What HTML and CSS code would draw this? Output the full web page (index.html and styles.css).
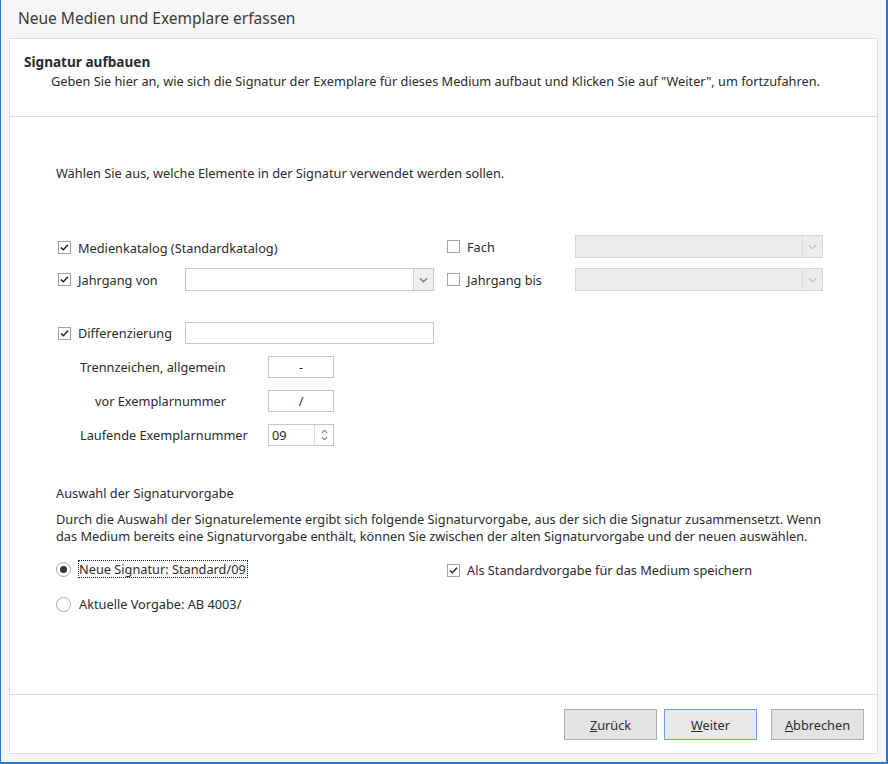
FILE: index.html
```html
<!DOCTYPE html>
<html lang="de">
<head>
    <meta charset="UTF-8">
    <title>Neue Medien und Exemplare erfassen</title>
    <link rel="stylesheet" href="styles.css">
</head>
<body>
    <div class="window">
        <div class="title">Neue Medien und Exemplare erfassen</div>
        <div class="panel">
            <div class="panel-head">
                <div class="head-title">Signatur aufbauen</div>
                <div class="head-text">Geben Sie hier an, wie sich die Signatur der Exemplare für dieses Medium aufbaut und Klicken Sie auf "Weiter", um fortzufahren.</div>
            </div>

            <div class="panel-body">
                <p class="intro">Wählen Sie aus, welche Elemente in der Signatur verwendet werden sollen.</p>

                <div class="opt-rows">
                    <div class="opt-row">
                        <div class="half">
                            <label class="check wide"><span class="box checked"><svg viewBox="0 0 13 13"><path d="M2.4 6.4 L5.1 9.1 L10.6 3.2"/></svg></span>Medienkatalog (Standardkatalog)</label>
                        </div>
                        <div class="half right">
                            <label class="check"><span class="box"></span>Fach</label>
                            <div class="combo disabled"><span class="combo-btn"><svg viewBox="0 0 10 6"><path d="M1 1 L5 5 L9 1"/></svg></span></div>
                        </div>
                    </div>
                    <div class="opt-row">
                        <div class="half">
                            <label class="check"><span class="box checked"><svg viewBox="0 0 13 13"><path d="M2.4 6.4 L5.1 9.1 L10.6 3.2"/></svg></span>Jahrgang von</label>
                            <div class="combo"><span class="combo-btn"><svg viewBox="0 0 10 6"><path d="M1 1 L5 5 L9 1"/></svg></span></div>
                        </div>
                        <div class="half right">
                            <label class="check"><span class="box"></span>Jahrgang bis</label>
                            <div class="combo disabled"><span class="combo-btn"><svg viewBox="0 0 10 6"><path d="M1 1 L5 5 L9 1"/></svg></span></div>
                        </div>
                    </div>
                </div>

                <div class="opt-row diff-row">
                    <label class="check"><span class="box checked"><svg viewBox="0 0 13 13"><path d="M2.4 6.4 L5.1 9.1 L10.6 3.2"/></svg></span>Differenzierung</label>
                    <div class="textbox long"></div>
                </div>

                <div class="sub-rows">
                    <div class="sub-row">
                        <span class="sub-label">Trennzeichen, allgemein</span>
                        <div class="textbox short center">-</div>
                    </div>
                    <div class="sub-row">
                        <span class="sub-label indent">vor Exemplarnummer</span>
                        <div class="textbox short center">/</div>
                    </div>
                    <div class="sub-row">
                        <span class="sub-label">Laufende Exemplarnummer</span>
                        <div class="textbox short spin">
                            <span class="spin-value">09</span>
                            <span class="spin-btn">
                                <svg viewBox="0 0 8 5"><path d="M1 4 L4 1 L7 4"/></svg>
                                <svg viewBox="0 0 8 5"><path d="M1 1 L4 4 L7 1"/></svg>
                            </span>
                        </div>
                    </div>
                </div>

                <div class="choice">
                    <div class="choice-title">Auswahl der Signaturvorgabe</div>
                    <p class="choice-text">Durch die Auswahl der Signaturelemente ergibt sich folgende Signaturvorgabe, aus der sich die Signatur zusammensetzt. Wenn<br>das Medium bereits eine Signaturvorgabe enthält, können Sie zwischen der alten Signaturvorgabe und der neuen auswählen.</p>

                    <div class="choice-row first">
                        <div class="half">
                            <label class="radio"><span class="dot selected"></span><span class="focus">Neue Signatur: Standard/09</span></label>
                        </div>
                        <div class="half">
                            <label class="check"><span class="box checked"><svg viewBox="0 0 13 13"><path d="M2.4 6.4 L5.1 9.1 L10.6 3.2"/></svg></span>Als Standardvorgabe für das Medium speichern</label>
                        </div>
                    </div>
                    <div class="choice-row">
                        <label class="radio"><span class="dot"></span><span class="plain">Aktuelle Vorgabe: AB 4003/</span></label>
                    </div>
                </div>
            </div>

            <div class="panel-foot">
                <button class="btn"><u>Z</u>urück</button>
                <button class="btn default"><u>W</u>eiter</button>
                <button class="btn cancel"><u>A</u>bbrechen</button>
            </div>
        </div>
    </div>
</body>
</html>
```

FILE: styles.css
```css
body {
    margin: 0;
    font-family: "Noto Sans", "Open Sans", sans-serif;
    font-size: 12.75px;
    color: #2b2b2b;
}

.window {
    width: 888px;
    height: 764px;
    box-sizing: border-box;
    border: 2px solid #1f7bd6;
    border-top: none;
    border-left-width: 1px;
    background-color: #f6f6f6;
    display: flex;
    flex-direction: column;
}

.title {
    height: 38px;
    line-height: 36px;
    padding-left: 17px;
    font-size: 15.5px;
    color: #3a3a3a;
}

.panel {
    flex-grow: 1;
    margin: 0 8px 8px 8px;
    background-color: white;
    border: 1px solid #dcdcdc;
    display: flex;
    flex-direction: column;
}

.panel-head {
    height: 78px;
    border-bottom: 1px solid #dcdcdc;
    padding: 13px 0 0 14px;
    box-sizing: border-box;
}

.head-title {
    font-weight: bold;
    font-size: 13.6px;
    line-height: 19px;
}

.head-text {
    padding-left: 27px;
    line-height: 21px;
}

.panel-body {
    flex-grow: 1;
    padding-left: 46px;
}

.intro {
    margin: 47px 0 0 0;
    line-height: 18px;
}

/* option rows with checkbox + combo */
.opt-rows {
    margin-top: 53px;
    display: flex;
    flex-direction: column;
    gap: 10px;
}

.opt-row {
    display: flex;
    align-items: center;
    height: 23px;
}

.half {
    display: flex;
    align-items: center;
    width: 389px;
}

.check {
    display: flex;
    align-items: center;
    width: 129px;
    flex-shrink: 0;
    white-space: nowrap;
}

.half.right .check {
    width: 130px;
}

.check.wide {
    width: auto;
    padding-top: 2px;
}

.opt-row .check {
    padding-left: 2px;
    box-sizing: border-box;
}

.box {
    width: 13px;
    height: 13px;
    box-sizing: border-box;
    border: 1px solid #a3a3a3;
    background-color: white;
    margin-right: 7px;
    display: inline-block;
    flex-shrink: 0;
}

.box svg {
    display: block;
    width: 11px;
    height: 11px;
    fill: none;
    stroke: #222;
    stroke-width: 1.8;
}

.combo {
    width: 249px;
    height: 23px;
    box-sizing: border-box;
    border: 1px solid #c6c6c6;
    background-color: white;
    display: flex;
    justify-content: flex-end;
}

.combo.disabled {
    width: 248px;
    background-color: #ececec;
    border-color: #d6d6d6;
}

.combo-btn {
    width: 19px;
    border-left: 1px solid #d4d4d4;
    background-color: #efefef;
    display: flex;
    align-items: center;
    justify-content: center;
}

.combo.disabled .combo-btn {
    background-color: #ececec;
    border-left-color: #dadada;
}

.combo-btn svg {
    width: 9px;
    height: 6px;
    fill: none;
    stroke: #7a7a7a;
    stroke-width: 1.6;
}

.combo.disabled .combo-btn svg {
    stroke: #b8b8b8;
    stroke-width: 1.2;
}

.diff-row {
    margin-top: 31px;
    height: 22px;
}

.textbox {
    height: 22px;
    box-sizing: border-box;
    border: 1px solid #c6c6c6;
    background-color: white;
    line-height: 20px;
}

.textbox.long {
    width: 249px;
}

.textbox.short {
    width: 66px;
}

.textbox.center {
    text-align: center;
}

/* Trennzeichen sub rows */
.sub-rows {
    margin-top: 12px;
    padding-left: 24px;
    display: flex;
    flex-direction: column;
    gap: 12px;
}

.sub-row {
    display: flex;
    align-items: center;
}

.sub-label {
    width: 188px;
    box-sizing: border-box;
}

.sub-label.indent {
    padding-left: 15px;
}

.spin {
    display: flex;
    justify-content: space-between;
}

.spin-value {
    padding-left: 3px;
}

.spin-btn {
    width: 18px;
    border-left: 1px solid #dcdcdc;
    display: flex;
    flex-direction: column;
    align-items: center;
    justify-content: center;
    gap: 2px;
}

.spin-btn svg {
    width: 7px;
    height: 5px;
    fill: none;
    stroke: #777;
    stroke-width: 1.2;
}

/* Signaturvorgabe */
.choice {
    margin-top: 38px;
}

.choice-title {
    line-height: 18px;
}

.choice-text {
    margin: 9px 0 0 0;
    line-height: 17px;
}

.choice-row {
    display: flex;
    align-items: center;
    height: 20px;
}

.choice-row.first {
    margin-top: 14px;
}

.choice-row + .choice-row {
    margin-top: 15px;
}

.choice-row .half {
    width: 391px;
}

.choice-row .check {
    padding-top: 2px;
}

.radio {
    display: flex;
    align-items: center;
    white-space: nowrap;
}

.dot {
    width: 15px;
    height: 15px;
    box-sizing: border-box;
    border: 1px solid #a8a8a8;
    border-radius: 50%;
    background-color: white;
    margin-right: 8px;
    display: flex;
    align-items: center;
    justify-content: center;
}

.dot.selected::after {
    content: "";
    width: 7px;
    height: 7px;
    border-radius: 50%;
    background-color: #333;
}

.focus {
    border: 1px dotted #222;
    padding: 0 1px 0 0;
    line-height: 16px;
    margin-left: -1px;
}

.panel-foot {
    height: 59px;
    border-top: 1px solid #dcdcdc;
    display: flex;
    justify-content: flex-end;
    padding: 14px 13px 0 0;
    box-sizing: border-box;
    gap: 7px;
}

.btn {
    width: 93px;
    height: 31px;
    font-family: "Noto Sans", "Open Sans", sans-serif;
    font-size: 12.75px;
    color: #2b2b2b;
    background-color: #e3e3e3;
    border: 1px solid #adadad;
    padding: 0;
}

.btn.default {
    border-color: #5fa5ec;
    background-color: #e8e8e8;
}

.btn.cancel {
    margin-left: 7px;
}
```
